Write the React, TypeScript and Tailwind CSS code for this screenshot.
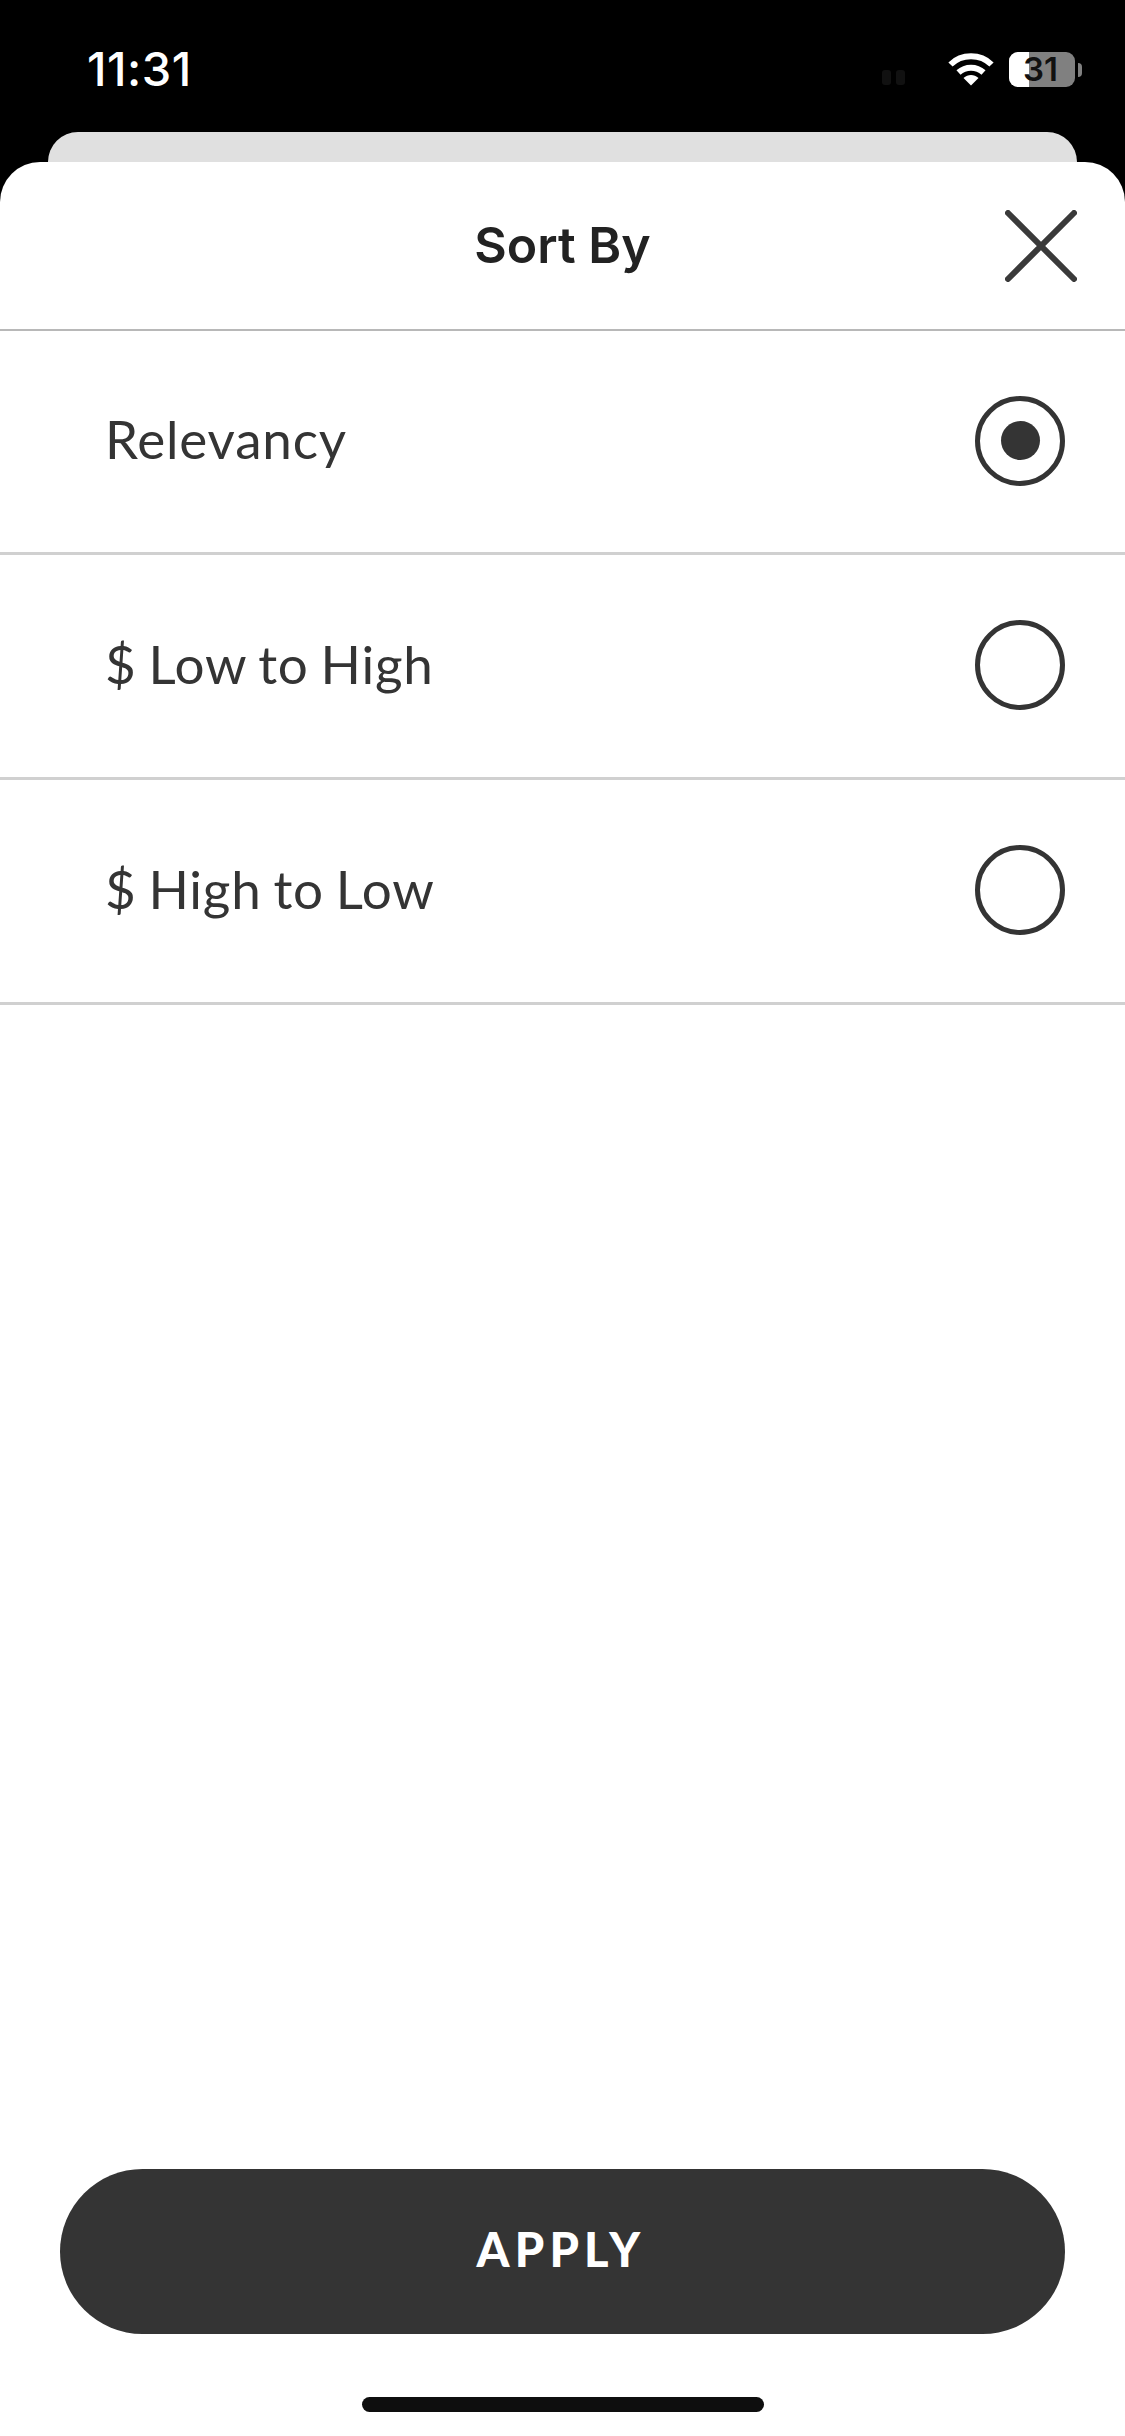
const SANS = 'font-["Lato","Liberation_Sans",sans-serif]';

const OPTIONS = [
  { label: 'Relevancy', selected: true },
  { label: '$ Low to High', selected: false },
  { label: '$ High to Low', selected: false },
];

function WifiIcon() {
  return (
    <svg width="46" height="34" viewBox="0 0 46 34" fill="none">
      <path d="M2.5 12.5C13.5 1.5 32.5 1.5 43.5 12.5" stroke="#fff" strokeWidth="6" strokeLinecap="butt" />
      <path d="M10.5 20.5C17.5 14 28.5 14 35.5 20.5" stroke="#fff" strokeWidth="6" strokeLinecap="butt" />
      <path d="M15.5 26L23 33.5L30.5 26C26 22 20 22 15.5 26Z" fill="#fff" />
    </svg>
  );
}

function Battery() {
  return (
    <div className="flex items-center">
      <div className="relative flex h-[35px] w-[66px] items-center justify-center rounded-[9px] bg-[#808080]">
        <div className="absolute inset-y-0 left-0 w-[20px] rounded-l-[9px] bg-white" />
        <span className="relative pr-[3px] font-['Inter',sans-serif] text-[33px] font-semibold leading-none text-[#111]">31</span>
      </div>
      <div className="ml-[3px] h-[14px] w-[4px] rounded-r-full bg-[#808080]" />
    </div>
  );
}

function CloseIcon() {
  return (
    <svg width="72" height="72" viewBox="0 0 72 72" fill="none">
      <path d="M3 3L69 69M69 3L3 69" stroke="#3a3a3a" strokeWidth="6" strokeLinecap="round" />
    </svg>
  );
}

function Radio({ selected }: { selected: boolean }) {
  return (
    <div className="mb-[2px] flex h-[90px] w-[90px] items-center justify-center rounded-full border-[5px] border-[#343434]">
      {selected && <div className="h-[39px] w-[39px] rounded-full bg-[#343434]" />}
    </div>
  );
}

export default function App() {
  return (
    <div className={`flex h-[2436px] w-[1125px] flex-col overflow-hidden bg-black ${SANS}`}>
      <div className="flex h-[132px] shrink-0 items-start justify-between pl-[87px] pr-[43px] pt-[43px]">
        <span className="font-['Inter',sans-serif] text-[47px] font-medium leading-[52px] tracking-[0.5px] text-white">11:31</span>
        <div className="flex items-start pt-[9px]">
          <div className="mr-[43px] mt-[18px] flex gap-[5px]">
            <div className="h-[15px] w-[9px] rounded-[3px] bg-[#111]" />
            <div className="h-[15px] w-[9px] rounded-[3px] bg-[#111]" />
          </div>
          <div className="mr-[15px]"><WifiIcon /></div>
          <Battery />
        </div>
      </div>

      <div className="mx-[48px] h-[30px] shrink-0 rounded-t-[30px] bg-[#e0e0e0]" />

      <div className="flex min-h-0 flex-1 flex-col rounded-t-[40px] bg-white">
        <div className="relative flex h-[169px] shrink-0 items-center justify-center border-b-2 border-[#b8b8b8]">
          <span className="font-['Inter',sans-serif] text-[50px] font-semibold text-[#222]">Sort By</span>
          <button className="absolute right-[48px] top-[48px]"><CloseIcon /></button>
        </div>

        {OPTIONS.map((o) => (
          <div key={o.label} className={`flex shrink-0 items-center justify-between border-b-[3px] border-[#d0d0d0] pl-[105px] pr-[60px] ${o.selected ? 'h-[224px]' : 'h-[225px]'}`}>
            <span className="pb-[5px] text-[53px] font-normal tracking-[0.8px] text-[#343434] [word-spacing:-2.5px]">{o.label}</span>
            <Radio selected={o.selected} />
          </div>
        ))}

        <div className="flex-1" />

        <div className="flex flex-col items-center px-[60px] pb-[24px]">
          <button className="flex h-[165px] w-full items-center justify-center rounded-full bg-[#343434] pb-[5px] pr-[3px] text-[47px] font-black tracking-[0.11em] text-white">APPLY</button>
          <div className="mt-[63px] h-[15px] w-[402px] rounded-full bg-[#0e0e0e]" />
        </div>
      </div>
    </div>
  );
}
